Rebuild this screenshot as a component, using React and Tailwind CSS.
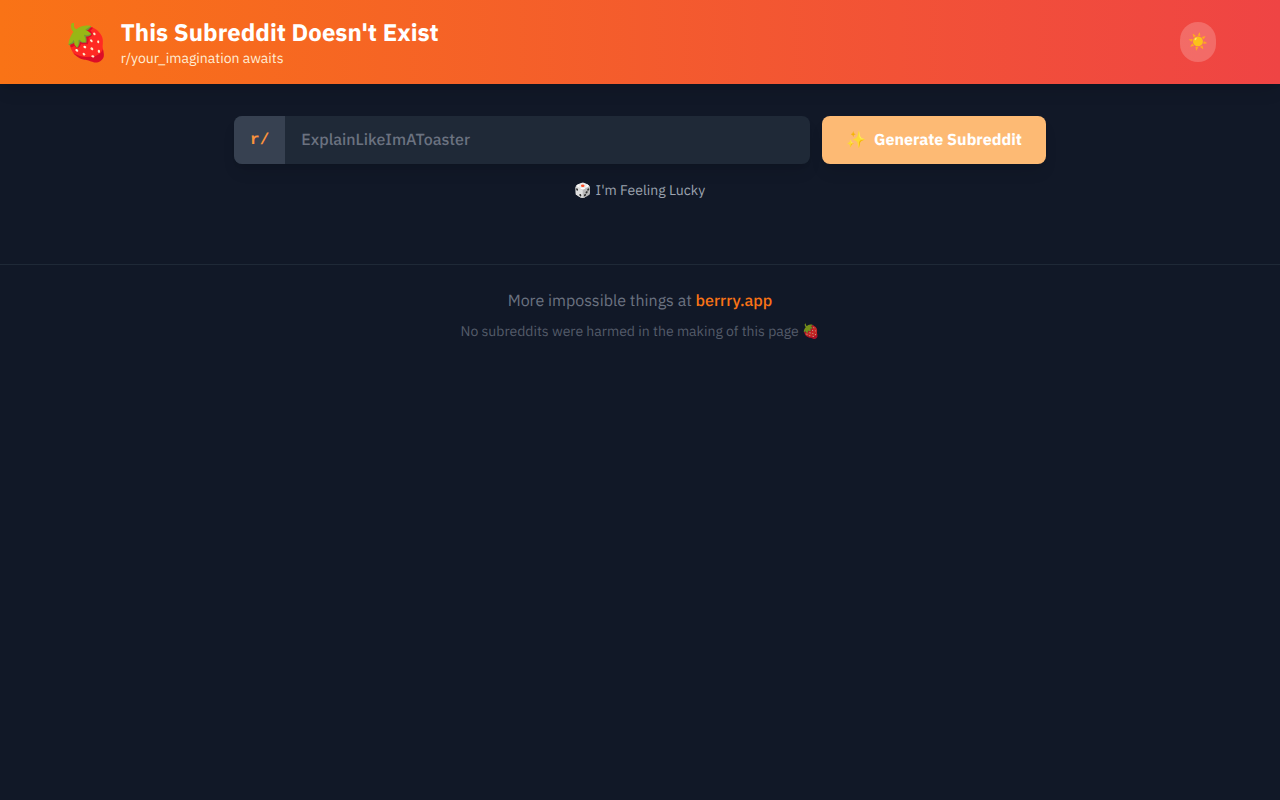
export default function App() {
  return (
    <div className="min-h-screen bg-[#111827] font-['IBM_Plex_Sans','Noto_Sans',sans-serif] text-[#f3f4f6] antialiased [&_*]:[text-rendering:geometricPrecision]">
      <header className="bg-linear-to-r/srgb from-[#f97316] to-[#ef4444] text-white shadow-lg">
        <div className="mx-auto flex max-w-6xl items-center justify-between py-4">
          <div className="flex items-center gap-3">
            <span className="text-4xl">🍓</span>
            <div>
              <h1 className="text-2xl font-bold">This Subreddit Doesn't Exist</h1>
              <p className="text-sm text-[#ffedd5]">r/your_imagination awaits</p>
            </div>
          </div>
          <button type="button" aria-label="Toggle theme" className="rounded-full bg-white/20 p-2">
            ☀️
          </button>
        </div>
      </header>

      <main className="px-4 py-8">
        <form className="flex flex-col justify-center gap-3 sm:flex-row">
          <div className="flex w-full max-w-xl overflow-hidden rounded-lg bg-[#1f2937] shadow-lg">
            <label
              htmlFor="subreddit"
              className="bg-[#374151] px-4 py-3 font-['Liberation_Mono',monospace] font-bold text-[#fb923c]"
            >
              r/
            </label>
            <input
              id="subreddit"
              type="text"
              placeholder="ExplainLikeImAToaster"
              className="min-w-0 flex-1 bg-transparent px-4 py-3 font-medium outline-none placeholder:text-[#6b7280]"
            />
          </div>
          <button
            type="submit"
            disabled
            className="flex items-center justify-center gap-2 rounded-lg bg-[#fdba74] px-6 py-3 font-bold whitespace-nowrap text-white shadow-lg"
          >
            <span>✨</span>
            <span>Generate Subreddit</span>
          </button>
        </form>
        <div className="mt-4 flex justify-center">
          <button type="button" className="text-sm text-[#9ca3af]">
            🎲 I'm Feeling Lucky
          </button>
        </div>
      </main>

      <footer className="mt-8 border-t border-[#1f2937] py-6 text-center">
        <p className="text-[#6b7280]">
          More impossible things at{" "}
          <a href="https://berrry.app" className="font-medium text-[#f97316]">
            berrry.app
          </a>
        </p>
        <p className="mt-2 text-sm text-[#6b7280] opacity-75">
          No subreddits were harmed in the making of this page 🍓
        </p>
      </footer>
    </div>
  );
}
